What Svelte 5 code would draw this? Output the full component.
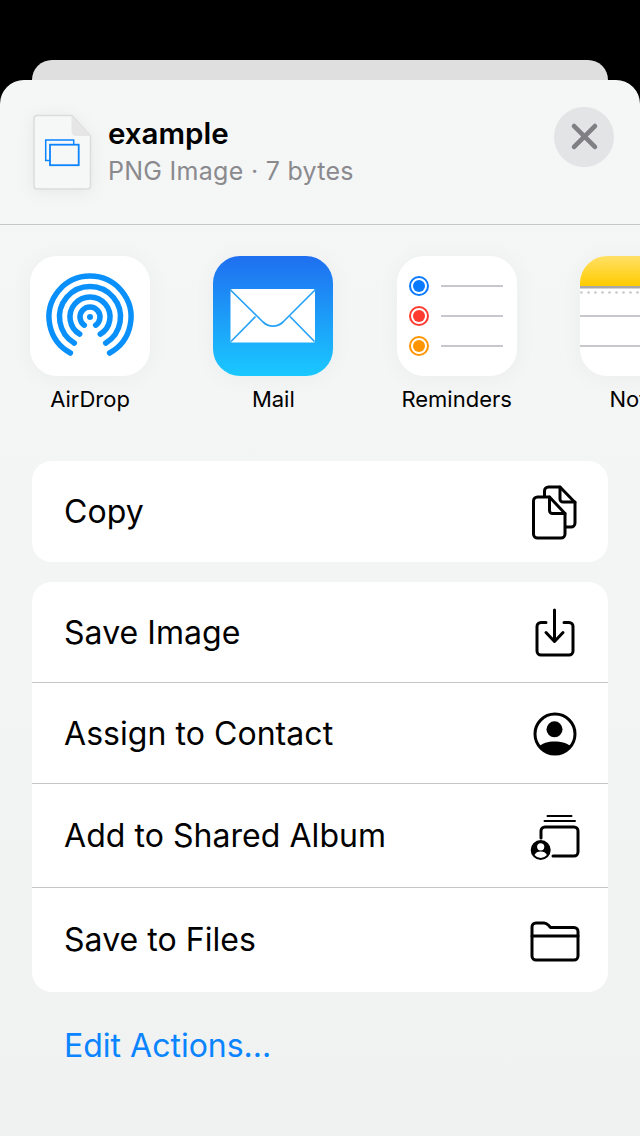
<script lang="ts">
  const apps = [
    { id: 'airdrop', label: 'AirDrop' },
    { id: 'mail', label: 'Mail' },
    { id: 'reminders', label: 'Reminders' },
    { id: 'notes', label: 'Notes' },
  ]
  const reminderRows = [
    { y: 30, color: '#0a7aff' },
    { y: 60, color: '#ff3b30' },
    { y: 90, color: '#ff9500' },
  ]
  const noteDots = Array.from({ length: 9 }, (_, i) => 1.5 + i * 7)
  const groupRows = [
    { id: 'save', label: 'Save Image', tall: false },
    { id: 'contact', label: 'Assign to Contact', tall: false },
    { id: 'album', label: 'Add to Shared Album', tall: true },
    { id: 'files', label: 'Save to Files', tall: true },
  ]
</script>

{#snippet rowIcon(id)}
  <svg class="row__icon" viewBox="0 0 60 60" fill="none" stroke="#000" stroke-width="3" stroke-linecap="round" stroke-linejoin="round" aria-hidden="true">
    {#if id === 'copy'}
      <g transform="translate(0 1)">
        <path d="M19.5 14V9a4 4 0 0 1 4-4H35L50 20.5V41a4 4 0 0 1-4 4H41" />
        <path d="M35 5v12a3 3 0 0 0 3 3h12" />
        <path d="M12.5 15H24.500L40 31.500V52a4 4 0 0 1-4 4H12.500a4 4 0 0 1-4-4V19a4 4 0 0 1 4-4z" />
        <path d="M24.500 15v13.500a3 3 0 0 0 3 3H40" />
      </g>
    {:else if id === 'save'}
      <path d="M21 20.500h-5a4 4 0 0 0-4 4V49a4 4 0 0 0 4 4h28a4 4 0 0 0 4-4V24.500a4 4 0 0 0-4-4h-5" />
      <path d="M29.500 8v31M21 30.500l8.500 9 8.500-9" />
    {:else if id === 'contact'}
      <g transform="translate(0 1)">
        <circle cx="30" cy="30" r="20" />
        <circle cx="29.500" cy="25.300" r="8" fill="#000" stroke="none" />
        <path d="M14 43c3-4 9-5.500 15.500-5.500S43 39 46 43a20 20 0 0 1-32 0z" fill="#000" stroke="none" />
      </g>
    {:else if id === 'album'}
      <path d="M22.500 10h24M19.500 15h30.500" stroke-width="2" />
      <path d="M16 32v-7a4 4 0 0 1 4-4h29a4 4 0 0 1 4 4v21a4 4 0 0 1-4 4H28" />
      <circle cx="15.700" cy="44" r="10" fill="#000" stroke="none" />
      <circle cx="15.700" cy="40.800" r="3.600" fill="#fff" stroke="none" />
      <path d="M9.500 49c1-2.500 3.500-3.500 6.200-3.500s5.200 1 6.200 3.500a8 8 0 0 1-12.400 0z" fill="#fff" stroke="none" />
    {:else}
      <path d="M11 13h8c2 0 3 .8 4.500 2.300l2 2.200H49a4 4 0 0 1 4 4V46a4 4 0 0 1-4 4H11a4 4 0 0 1-4-4V17a4 4 0 0 1 4-4z" />
      <path d="M7 26h46" />
    {/if}
  </svg>
{/snippet}

<div class="page">
  <div class="back-card"></div>
  <div class="sheet">
    <header class="head">
      <svg class="doc" viewBox="0 0 60 78" aria-hidden="true">
        <path d="M4 1.500h35L57.500 22v50a3 3 0 0 1-3 3H4a3 3 0 0 1-3-3V4.500a3 3 0 0 1 3-3z" fill="#f6f7f7" stroke="#dcdcdc" stroke-width="1.500" />
        <path d="M38.500 1.500 57.500 22H43a4.500 4.500 0 0 1-4.500-4.500z" fill="#e6e6e7" />
        <rect x="12.700" y="26" width="28" height="20.500" fill="none" stroke="#0a84ff" stroke-width="1.500" />
        <rect x="17" y="30.700" width="28.700" height="20.500" fill="#f6f7f7" stroke="#0a84ff" stroke-width="1.800" />
      </svg>
      <div class="head__text">
        <div class="head__title">example</div>
        <div class="head__sub">PNG Image · 7 bytes</div>
      </div>
      <div class="close">
        <svg viewBox="0 0 24 24" aria-hidden="true">
          <path d="M2 2l20 20M22 2 2 22" stroke="#808084" stroke-width="4.500" stroke-linecap="round" />
        </svg>
      </div>
    </header>

    <div class="apps">
      {#each apps as app}
        <div class="app">
          <div class="app__tile">
            <svg viewBox="0 0 120 120" aria-hidden="true">
              {#if app.id === 'airdrop'}
                <g fill="none" stroke="#0a90fb" stroke-width="5.500" stroke-linecap="round">
                  <path d="M40.400 97A41 41 0 1 1 79.600 97" />
                  <path d="M44.300 87.100A30.500 30.500 0 1 1 75.700 87.100" />
                  <path d="M49.700 78.100A20 20 0 1 1 70.300 78.100" />
                  <path d="M54.300 69.200A10 10 0 1 1 65.700 69.200" />
                </g>
                <circle cx="60" cy="61" r="3" fill="#0a90fb" />
              {:else if app.id === 'mail'}
                <defs>
                  <linearGradient id="mail-bg" x1="0" y1="0" x2="0" y2="1">
                    <stop offset="0" stop-color="#1f6ff0" />
                    <stop offset="1" stop-color="#1ac8ff" />
                  </linearGradient>
                </defs>
                <rect width="120" height="120" fill="url(#mail-bg)" />
                <rect x="17.500" y="33" width="84.500" height="53.500" rx="1.500" fill="#fff" />
                <path d="M17 33.500 50 66c6 5.500 14 5.500 20 0l32.500-32.500M42.500 60.500 18 85.500M77 60.500l24.500 25" fill="none" stroke="#27a2f6" stroke-width="1.700" />
              {:else if app.id === 'reminders'}
                {#each reminderRows as row}
                  <circle cx="22" cy={row.y} r="9" fill="none" stroke={row.color} stroke-width="2" />
                  <circle cx="22" cy={row.y} r="6" fill={row.color} />
                  <path d="M44 {row.y}h62" stroke="#c7c7cc" stroke-width="2" />
                {/each}
              {:else}
                <defs>
                  <linearGradient id="notes-bg" x1="0" y1="0" x2="0" y2="1">
                    <stop offset="0" stop-color="#ffe066" />
                    <stop offset="1" stop-color="#ffcc00" />
                  </linearGradient>
                </defs>
                <rect width="120" height="30" fill="url(#notes-bg)" />
                <rect y="30" width="120" height="2.500" fill="#a8a8aa" />
                {#each noteDots as x}
                  <circle cx={x} cy="36.500" r="1.300" fill="#c7c7cc" />
                {/each}
                <path d="M0 60h120M0 90h120" stroke="#c7c7cc" stroke-width="2" />
              {/if}
            </svg>
          </div>
          <div class="app__label">{app.label}</div>
        </div>
      {/each}
    </div>

    <div class="card card--copy">
      <div class="row">
        <span class="row__label">Copy</span>
        {@render rowIcon('copy')}
      </div>
    </div>

    <div class="card">
      {#each groupRows as row}
        <div class="row" class:row--tall={row.tall}>
          <span class="row__label">{row.label}</span>
          {@render rowIcon(row.id)}
        </div>
      {/each}
    </div>

    <div class="edit">Edit Actions...</div>
  </div>
</div>

<style>
  :global(body) {
    background: #000;
  }

  .page {
    width: 640px;
    height: 1136px;
    box-sizing: border-box;
    padding-top: 60px;
    overflow: hidden;
    background: #000;
    font-family: Inter, "Liberation Sans", sans-serif;
    color: #000;
  }

  .back-card {
    height: 20px;
    margin: 0 32px;
    border-radius: 20px 20px 0 0;
    background: #dfdfdf;
  }

  .sheet {
    height: 1056px;
    border-radius: 24px 24px 0 0;
    background: linear-gradient(180deg, #f5f6f6 0%, #f3f4f4 50%, #f0f1f1 100%);
    overflow: hidden;
  }

  .head {
    height: 145px;
    box-sizing: border-box;
    display: flex;
    align-items: center;
    padding: 0 26px 0 33px;
    border-bottom: 1px solid #c6c6c8;
  }

  .doc {
    width: 60px;
    height: 78px;
    flex-shrink: 0;
    margin-top: 2px;
    filter: drop-shadow(0 2px 8px rgb(0 0 0 / 0.06));
  }

  .head__text {
    flex: 1;
    margin-left: 15px;
    padding-bottom: 2px;
  }

  .head__title {
    font-size: 29.500px;
    line-height: 34px;
    font-weight: 600;
  }

  .head__sub {
    margin-top: 6px;
    font-size: 25px;
    line-height: 30px;
    letter-spacing: 0.28px;
    color: #8a8a8e;
  }

  .close {
    width: 60px;
    height: 60px;
    border-radius: 50%;
    background: #e3e4e5;
    display: flex;
    align-items: center;
    justify-content: center;
    margin-top: -31px;
    flex-shrink: 0;
  }

  .close svg {
    width: 25px;
    height: 25px;
    overflow: visible;
  }

  .apps {
    display: flex;
    gap: 63.330px;
    padding: 31px 0 0 30px;
    height: 236px;
    box-sizing: border-box;
    overflow: hidden;
  }

  .app {
    width: 120px;
    flex-shrink: 0;
    display: flex;
    flex-direction: column;
    align-items: center;
  }

  .app__tile {
    width: 120px;
    height: 120px;
    border-radius: 27px;
    overflow: hidden;
    background: #fff;
    box-shadow: 0 2px 24px rgb(0 0 0 / 0.04);
  }

  .app__tile svg {
    display: block;
    width: 120px;
    height: 120px;
  }

  .app__label {
    margin-top: 10px;
    font-size: 22px;
    line-height: 26px;
    white-space: nowrap;
  }

  .card {
    margin: 0 32px;
    border-radius: 20px;
    background: #fff;
    overflow: hidden;
  }

  .card--copy {
    margin-bottom: 20px;
  }

  .row {
    height: 101px;
    box-sizing: border-box;
    display: flex;
    align-items: center;
    justify-content: space-between;
    padding: 0 23px 0 32px;
    border-bottom: 1px solid #c6c6c8;
  }

  .row--tall {
    height: 104px;
  }

  .row:last-child {
    border-bottom-color: transparent;
  }

  .row__label {
    font-size: 32px;
    letter-spacing: 0.05px;
  }

  .row__icon {
    width: 60px;
    height: 60px;
    flex-shrink: 0;
  }

  .edit {
    padding: 34px 0 0 64px;
    font-size: 32px;
    line-height: 40px;
    color: #0a84ff;
  }
</style>
